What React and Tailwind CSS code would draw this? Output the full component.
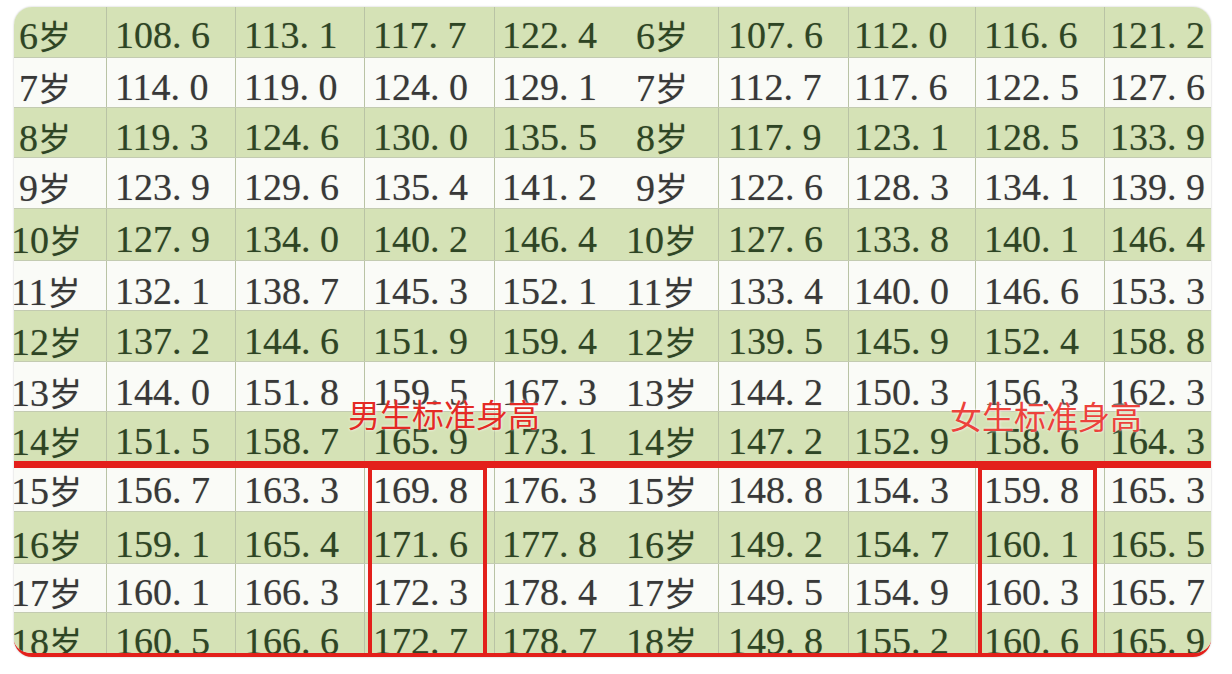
import React from "react";

const rows = [
  { a: 6, m: ["108. 6", "113. 1", "117. 7", "122. 4"], f: ["107. 6", "112. 0", "116. 6", "121. 2"], g: true, row: "h-[50px]", pt: "pt-[9px]" },
  { a: 7, m: ["114. 0", "119. 0", "124. 0", "129. 1"], f: ["112. 7", "117. 6", "122. 5", "127. 6"], g: false, row: "h-[50px]", pt: "pt-[10px]" },
  { a: 8, m: ["119. 3", "124. 6", "130. 0", "135. 5"], f: ["117. 9", "123. 1", "128. 5", "133. 9"], g: true, row: "h-[50px]", pt: "pt-[10px]" },
  { a: 9, m: ["123. 9", "129. 6", "135. 4", "141. 2"], f: ["122. 6", "128. 3", "134. 1", "139. 9"], g: false, row: "h-[51px]", pt: "pt-[10px]" },
  { a: 10, m: ["127. 9", "134. 0", "140. 2", "146. 4"], f: ["127. 6", "133. 8", "140. 1", "146. 4"], g: true, row: "h-[52px]", pt: "pt-[11px]" },
  { a: 11, m: ["132. 1", "138. 7", "145. 3", "152. 1"], f: ["133. 4", "140. 0", "146. 6", "153. 3"], g: false, row: "h-[50px]", pt: "pt-[11px]" },
  { a: 12, m: ["137. 2", "144. 6", "151. 9", "159. 4"], f: ["139. 5", "145. 9", "152. 4", "158. 8"], g: true, row: "h-[51px]", pt: "pt-[11px]" },
  { a: 13, m: ["144. 0", "151. 8", "159. 5", "167. 3"], f: ["144. 2", "150. 3", "156. 3", "162. 3"], g: false, row: "h-[50px]", pt: "pt-[11px]" },
  { a: 14, m: ["151. 5", "158. 7", "165. 9", "173. 1"], f: ["147. 2", "152. 9", "158. 6", "164. 3"], g: true, row: "h-[50px]", pt: "pt-[10px]" },
  { a: 15, m: ["156. 7", "163. 3", "169. 8", "176. 3"], f: ["148. 8", "154. 3", "159. 8", "165. 3"], g: false, row: "h-[43px]", pt: "pt-[3px]", red: true },
  { a: 16, m: ["159. 1", "165. 4", "171. 6", "177. 8"], f: ["149. 2", "154. 7", "160. 1", "165. 5"], g: true, row: "h-[52px]", pt: "pt-[13px]" },
  { a: 17, m: ["160. 1", "166. 3", "172. 3", "178. 4"], f: ["149. 5", "154. 9", "160. 3", "165. 7"], g: false, row: "h-[49px]", pt: "pt-[9px]" },
  { a: 18, m: ["160. 5", "166. 6", "172. 7", "178. 7"], f: ["149. 8", "155. 2", "160. 6", "165. 9"], g: true, row: "h-[41px]", pt: "pt-[9px]" },
];

const numPl = ["", "pl-[8px]", "pl-[8px]", "pl-[8px]", "pl-[7px]", "", "pl-[9px]", "pl-[5px]", "pl-[8px]", "pl-[5px]"];

function Age({ a }) {
  return (
    <span className="whitespace-nowrap">
      {a}
      <span className="text-[33px] font-['Noto_Sans_CJK_SC',sans-serif]">岁</span>
    </span>
  );
}

function Row({ r, first }) {
  const bg = r.g ? "bg-[#d5e2b6] text-[#2e4524]" : "bg-[#fafbf7] text-[#383838]";
  const topBorder = first || r.red ? "" : "border-t border-[#c3cbb1]";
  const cells = [<Age a={r.a} />, ...r.m, <Age a={r.a} />, ...r.f];
  return (
    <div className={`grid grid-cols-[92px_129px_129px_130px_126px_98px_130px_127px_129px_107px] overflow-hidden ${r.row} ${bg} ${topBorder}`}>
      {cells.map((c, i) => {
        const bl = i === 0 || i === 5 ? "" : "border-l border-[#b9c3a5]";
        let pl = numPl[i];
        if (i === 0) pl = r.a < 10 ? "pl-[5px]" : "pl-0 ml-[-3px]";
        if (i === 5) pl = r.a < 10 ? "pl-[16px]" : "pl-[6px]";
        return (
          <div key={i} className={`flex items-start whitespace-pre [text-shadow:0_0_1px_rgba(0,0,0,0.3)] ${bl} ${pl} ${r.pt}`}>
            {c}
          </div>
        );
      })}
    </div>
  );
}

export default function App() {
  return (
    <div className="w-[1232px] h-[674px] bg-white pl-[14px] pt-[7px] font-['Liberation_Serif','Noto_Sans_CJK_SC',serif] text-[38px] leading-[38px]">
      <div className="relative w-[1197px] h-[650px] rounded-[18px] overflow-hidden border-b-4 border-[#e3201b] shadow-[0_0_2px_rgba(0,0,0,0.25)]">
        {rows.slice(0, 9).map((r, i) => (
          <Row key={r.a} r={r} first={i === 0} />
        ))}
        <div className="h-[7px] bg-[#e3201b]" />
        {rows.slice(9).map((r) => (
          <Row key={r.a} r={r} first={false} />
        ))}

        <div className="absolute left-[354px] top-[459px] w-[119px] h-[195px] border-[4px] border-[#e3201b]" />
        <div className="absolute left-[964px] top-[459px] w-[119px] h-[195px] border-[4px] border-[#e3201b]" />

        <div className="absolute left-[334px] top-[390px] whitespace-nowrap font-['Noto_Sans_CJK_SC',sans-serif] text-[32px] leading-[32px] text-[#e42a25] [text-shadow:0_0_3px_rgba(255,255,255,0.95)]">
          男生标准身高
        </div>
        <div className="absolute left-[936px] top-[392px] whitespace-nowrap font-['Noto_Sans_CJK_SC',sans-serif] text-[32px] leading-[32px] text-[#ec423c] [text-shadow:0_0_3px_rgba(255,255,255,0.95)]">
          女生标准身高
        </div>
      </div>
    </div>
  );
}
